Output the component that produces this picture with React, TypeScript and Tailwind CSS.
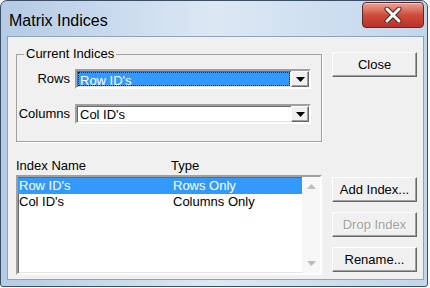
import React from "react";

const sunken =
  "border-2 border-t-[#a0a0a0] border-l-[#a0a0a0] border-r-white border-b-white shadow-[inset_1px_1px_0_#696969,inset_-1px_-1px_0_#e3e3e3]";

function Arrow({ color = "#000" }: { color?: string }) {
  return (
    <svg width="9" height="5" viewBox="0 0 9 5">
      <path d="M0 0h9L4.5 5z" fill={color} />
    </svg>
  );
}

function Combo({ value, selected }: { value: string; selected?: boolean }) {
  return (
    <div className={`flex h-[20px] w-[236px] bg-white ${sunken}`}>
      <div className="flex-1 p-[1px]">
        <div
          className={
            selected
              ? "h-full bg-[#3399ff] text-white border border-dotted border-[#1a1a1a] pl-[1px] leading-[15px]"
              : "h-full pl-[2px] leading-[16px]"
          }
        >
          {value}
        </div>
      </div>
      <div className="w-[18px] flex items-center justify-center bg-[#f0f0f0] border border-t-white border-l-white border-r-[#696969] border-b-[#696969] shadow-[inset_-1px_-1px_0_#a0a0a0]">
        <Arrow />
      </div>
    </div>
  );
}

function Button({ label, disabled }: { label: string; disabled?: boolean }) {
  return (
    <div
      className={`h-[25px] w-[85px] flex items-center justify-center bg-[#f0f0f0] border border-t-white border-l-white border-r-[#696969] border-b-[#696969] shadow-[inset_-1px_-1px_0_#a0a0a0] ${
        disabled ? "text-[#a0a0a0] [text-shadow:1px_1px_0_#ffffff]" : "text-black"
      }`}
    >
      {label}
    </div>
  );
}

const rows = [
  { name: "Row ID's", type: "Rows Only" },
  { name: "Col ID's", type: "Columns Only" },
];

export default function App() {
  return (
    <div className="w-[430px] h-[288px] overflow-hidden bg-white font-['Liberation_Sans',Arial,sans-serif] text-[13px] text-black">
      <div className="w-[428px] h-[287px] flex flex-col rounded-t-[7px] rounded-b-[3px] border border-[#3c4e66] bg-gradient-to-r from-[#b4cbe5] via-[#dce8f4] to-[#c2d6ec] pl-[6px] pr-[3px] pb-[6px]">
        <div className="h-[35px] flex items-start justify-between">
          <span className="mt-[11px] ml-[2px] text-[16px] leading-[18px]">Matrix Indices</span>
          <div className="mt-[1px] w-[62px] h-[26px] rounded-[4px] border border-[#5b2a26] bg-gradient-to-b from-[#e8a395] via-[#cf4c3b] to-[#b8322a] shadow-[inset_0_1px_0_#f4c7bd] flex items-center justify-center">
            <svg width="18" height="16" viewBox="0 0 18 16">
              <path
                d="M3 2 L15 14 M15 2 L3 14"
                stroke="#5a1e19"
                strokeWidth="5"
                strokeLinecap="round"
              />
              <path
                d="M3 2 L15 14 M15 2 L3 14"
                stroke="#ffffff"
                strokeWidth="3"
                strokeLinecap="round"
              />
            </svg>
          </div>
        </div>

        <div className="flex-1 flex border border-[#8ea3ba] bg-[#f0f0f0] pl-[8px] pr-[4px]">
          <div className="w-[306px] flex flex-col pt-[10px]">
            <fieldset className="border border-[#a0a0a0] shadow-[1px_1px_0_#ffffff] pt-[8px] pb-[17px] flex flex-col gap-[15px]">
              <legend className="ml-[7px] px-[2px] leading-[14px]">Current Indices</legend>
              <div className="flex items-center">
                <span className="w-[53px] text-right">Rows</span>
                <div className="ml-[5px]">
                  <Combo value="Row ID's" selected />
                </div>
              </div>
              <div className="flex items-center">
                <span className="w-[53px] text-right">Columns</span>
                <div className="ml-[5px]">
                  <Combo value="Col ID's" />
                </div>
              </div>
            </fieldset>

            <div className="mt-[16px] h-[16px] flex leading-[16px]">
              <span className="w-[155px]">Index Name</span>
              <span>Type</span>
            </div>

            <div className={`mt-[1px] h-[100px] flex bg-white ${sunken}`}>
              <div className="flex-1 pt-[1px]">
                {rows.map((r, i) => (
                  <div
                    key={r.name}
                    className={`h-[16px] flex leading-[16px] ${
                      i === 0 ? "bg-[#3399ff] text-white" : ""
                    }`}
                  >
                    <span className="w-[155px] pl-[1px]">{r.name}</span>
                    <span>{r.type}</span>
                  </div>
                ))}
              </div>
              <div className="w-[18px] bg-[#f7f7f7] flex flex-col justify-between items-center py-[7px]">
                <svg width="9" height="5" viewBox="0 0 9 5">
                  <path d="M0 5h9L4.5 0z" fill="#bcbcbc" />
                </svg>
                <svg width="9" height="5" viewBox="0 0 9 5">
                  <path d="M0 0h9L4.5 5z" fill="#bcbcbc" />
                </svg>
              </div>
            </div>
          </div>

          <div className="ml-[10px] flex flex-col pt-[15px]">
            <Button label="Close" />
            <div className="mt-[100px] flex flex-col gap-[10px]">
              <Button label="Add Index..." />
              <Button label="Drop Index" disabled />
              <Button label="Rename..." />
            </div>
          </div>
        </div>
      </div>
    </div>
  );
}
